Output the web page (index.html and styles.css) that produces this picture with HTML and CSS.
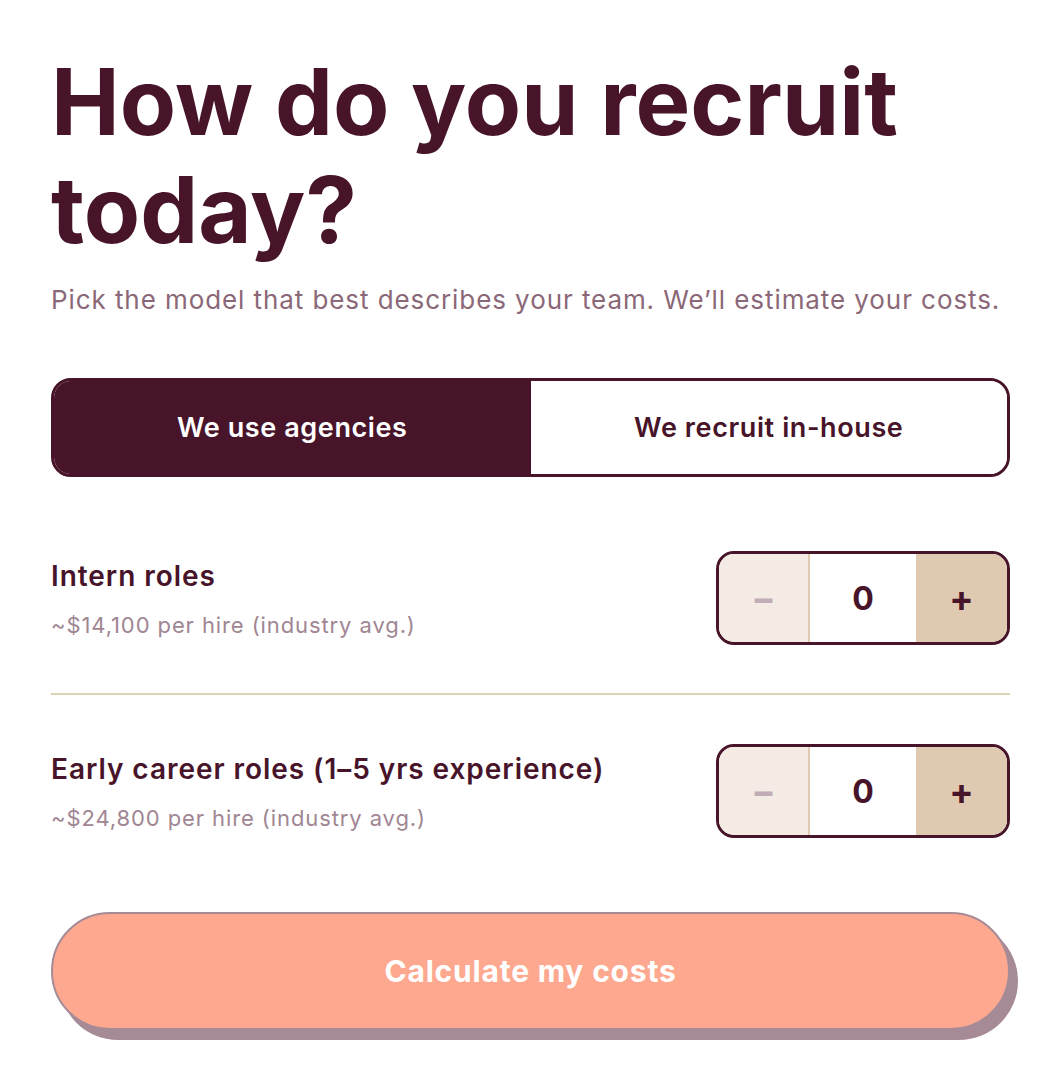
FILE: index.html
```html
<!DOCTYPE html>
<html lang="en">
<head>
  <meta charset="UTF-8" />
  <meta name="viewport" content="width=device-width, initial-scale=1.0">
  <title>Recruiting cost calculator</title>
  <link rel="stylesheet" href="styles.css">
</head>
<body>

  <div class="calc">
    <h1>How do you recruit today?</h1>
    <p class="lead">Pick the model that best describes your team. We’ll estimate your costs.</p>

    <!-- model toggle -->
    <div class="toggle">
      <button class="toggle-btn active">We use agencies</button>
      <button class="toggle-btn">We recruit in-house</button>
    </div>

    <!-- role rows -->
    <div class="role-row">
      <div class="role-text">
        <div class="role-name">Intern roles</div>
        <div class="role-cost">~$14,100 per hire (industry avg.)</div>
      </div>
      <div class="stepper">
        <button class="step minus">−</button>
        <div class="step-value">0</div>
        <button class="step plus">+</button>
      </div>
    </div>

    <div class="role-row">
      <div class="role-text">
        <div class="role-name">Early career roles (1–5 yrs experience)</div>
        <div class="role-cost">~$24,800 per hire (industry avg.)</div>
      </div>
      <div class="stepper">
        <button class="step minus">−</button>
        <div class="step-value">0</div>
        <button class="step plus">+</button>
      </div>
    </div>

    <button class="calc-btn">Calculate my costs</button>
  </div>

</body>
</html>
```

FILE: styles.css
```css
body {
  font-family: Inter, 'Noto Sans', sans-serif;
  margin: 0;
  background-color: #fff;
  color: #47142a;
}

.calc {
  padding: 48px 50px 40px 51px;
}

h1 {
  font-size: 92px;
  line-height: 108px;
  font-weight: 700;
  margin: 0;
}

.lead {
  font-size: 26px;
  line-height: 1.4;
  letter-spacing: 0.92px;
  color: #8b6878;
  margin: 18px 0 60px;
}

button {
  font-family: inherit;
  cursor: pointer;
}

.toggle {
  display: flex;
  height: 99px;
  box-sizing: border-box;
  border: 3px solid #47142a;
  border-radius: 20px;
  overflow: hidden;
  margin-bottom: 74px;
}

.toggle-btn {
  flex: 1;
  border: none;
  background: #fff;
  color: #47142a;
  font-size: 27px;
  font-weight: 600;
  letter-spacing: 0.6px;
}

.toggle-btn.active {
  background: #47142a;
  color: #fff;
}

.role-row {
  display: flex;
  align-items: center;
  justify-content: space-between;
  padding-bottom: 48px;
}

.role-row + .role-row {
  border-top: 2px solid #ddd3b6;
  padding-top: 49px;
  padding-bottom: 74px;
}

.role-name {
  font-size: 28px;
  font-weight: 600;
  letter-spacing: 0.95px;
  margin-bottom: 19px;
}

.role-cost {
  font-size: 22px;
  letter-spacing: 0.9px;
  color: #a08692;
}

.stepper {
  display: flex;
  width: 294px;
  height: 94px;
  box-sizing: border-box;
  border: 3px solid #47142a;
  border-radius: 18px;
  overflow: hidden;
}

.step {
  width: 91px;
  border: none;
  font-size: 36px;
  font-weight: 700;
}

.step.minus {
  background: #f3ebe4;
  color: #c2adb7;
  border-right: 2px solid #dfcab1;
}

.step.plus {
  background: #dfcab1;
  color: #47142a;
}

.step-value {
  flex: 1;
  display: flex;
  align-items: center;
  justify-content: center;
  font-size: 32px;
  font-weight: 700;
  background: #fff;
}

.calc-btn {
  display: block;
  width: 100%;
  height: 118px;
  border: 2px solid #a68b96;
  border-radius: 60px;
  background: #fda88f;
  color: #fff;
  font-size: 30px;
  font-weight: 700;
  letter-spacing: 0.8px;
  box-shadow: 8px 10px 0 #a68b96;
}
```
